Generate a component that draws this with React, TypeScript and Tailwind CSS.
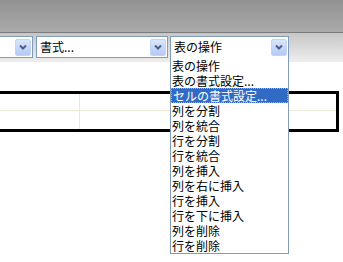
const items = [
  '表の操作',
  '表の書式設定...',
  'セルの書式設定...',
  '列を分割',
  '列を統合',
  '行を分割',
  '行を統合',
  '列を挿入',
  '列を右に挿入',
  '行を挿入',
  '行を下に挿入',
  '列を削除',
  '行を削除',
];

function ComboButton() {
  return (
    <div className="flex h-[17px] w-[16px] shrink-0 items-center justify-center rounded-[2px] border border-[#c3d3f7] bg-gradient-to-b from-[#dae5fd] to-[#b6c9f6]">
      <svg width="8" height="6" viewBox="0 0 8 6">
        <path d="M1 1.5 L4 4.5 L7 1.5" fill="none" stroke="#4d6185" strokeWidth="2" />
      </svg>
    </div>
  );
}

function Combo({ label, className }: { label: string; className: string }) {
  return (
    <div className={`flex h-[22px] shrink-0 items-center border border-[#7f9db9] bg-white pl-[3px] pr-[1px] ${className}`}>
      <span className="flex-1 whitespace-nowrap text-[12px] leading-[16px] text-black">{label}</span>
      <ComboButton />
    </div>
  );
}

export default function App() {
  return (
    <div
      className="relative h-[262px] w-[343px] overflow-hidden bg-white"
      style={{ fontFamily: '"Noto Sans CJK JP", "Noto Sans", sans-serif' }}
    >
      {/* window title area */}
      <div className="h-[32px] bg-gradient-to-b from-[#929292] to-[#aaaaaa]" />
      <div className="h-px bg-[#7b7b7b]" />

      {/* toolbar */}
      <div className="h-[29px] bg-gradient-to-b from-[#c6c6c6] to-[#eeeeee] pt-[3px]">
        <div className="flex">
          <Combo label="" className="ml-[-67px] w-[100px]" />
          <Combo label="書式..." className="ml-[3px] w-[132px]" />
          <div className="relative ml-[2px]">
            <Combo label="表の操作" className="w-[119px]" />
            {/* open list */}
            <div className="absolute left-0 top-[21px] z-10 w-[119px] border border-t-0 border-[#7f9db9] bg-white pt-px">
              {items.map((it, i) => (
                <div
                  key={it}
                  className={`flex h-[15px] items-center whitespace-nowrap pl-[1px] text-[12px] leading-[15px] ${
                    i === 2
                      ? 'border border-dotted border-[#e9a63b] bg-[#316ac5] text-white'
                      : 'text-black'
                  }`}
                >
                  {it}
                </div>
              ))}
            </div>
          </div>
        </div>
      </div>

      {/* table */}
      <div className="ml-[-10px] mt-[29px] w-[349px] border-[3px] border-black">
        <div className="flex h-[17px] border-b border-[#ece9d8]">
          <div className="w-[87px] border-r border-[#ece9d8]" />
          <div className="flex-1" />
        </div>
        <div className="flex h-[18px]">
          <div className="w-[87px] border-r border-[#ece9d8]" />
          <div className="flex-1" />
        </div>
      </div>
    </div>
  );
}
